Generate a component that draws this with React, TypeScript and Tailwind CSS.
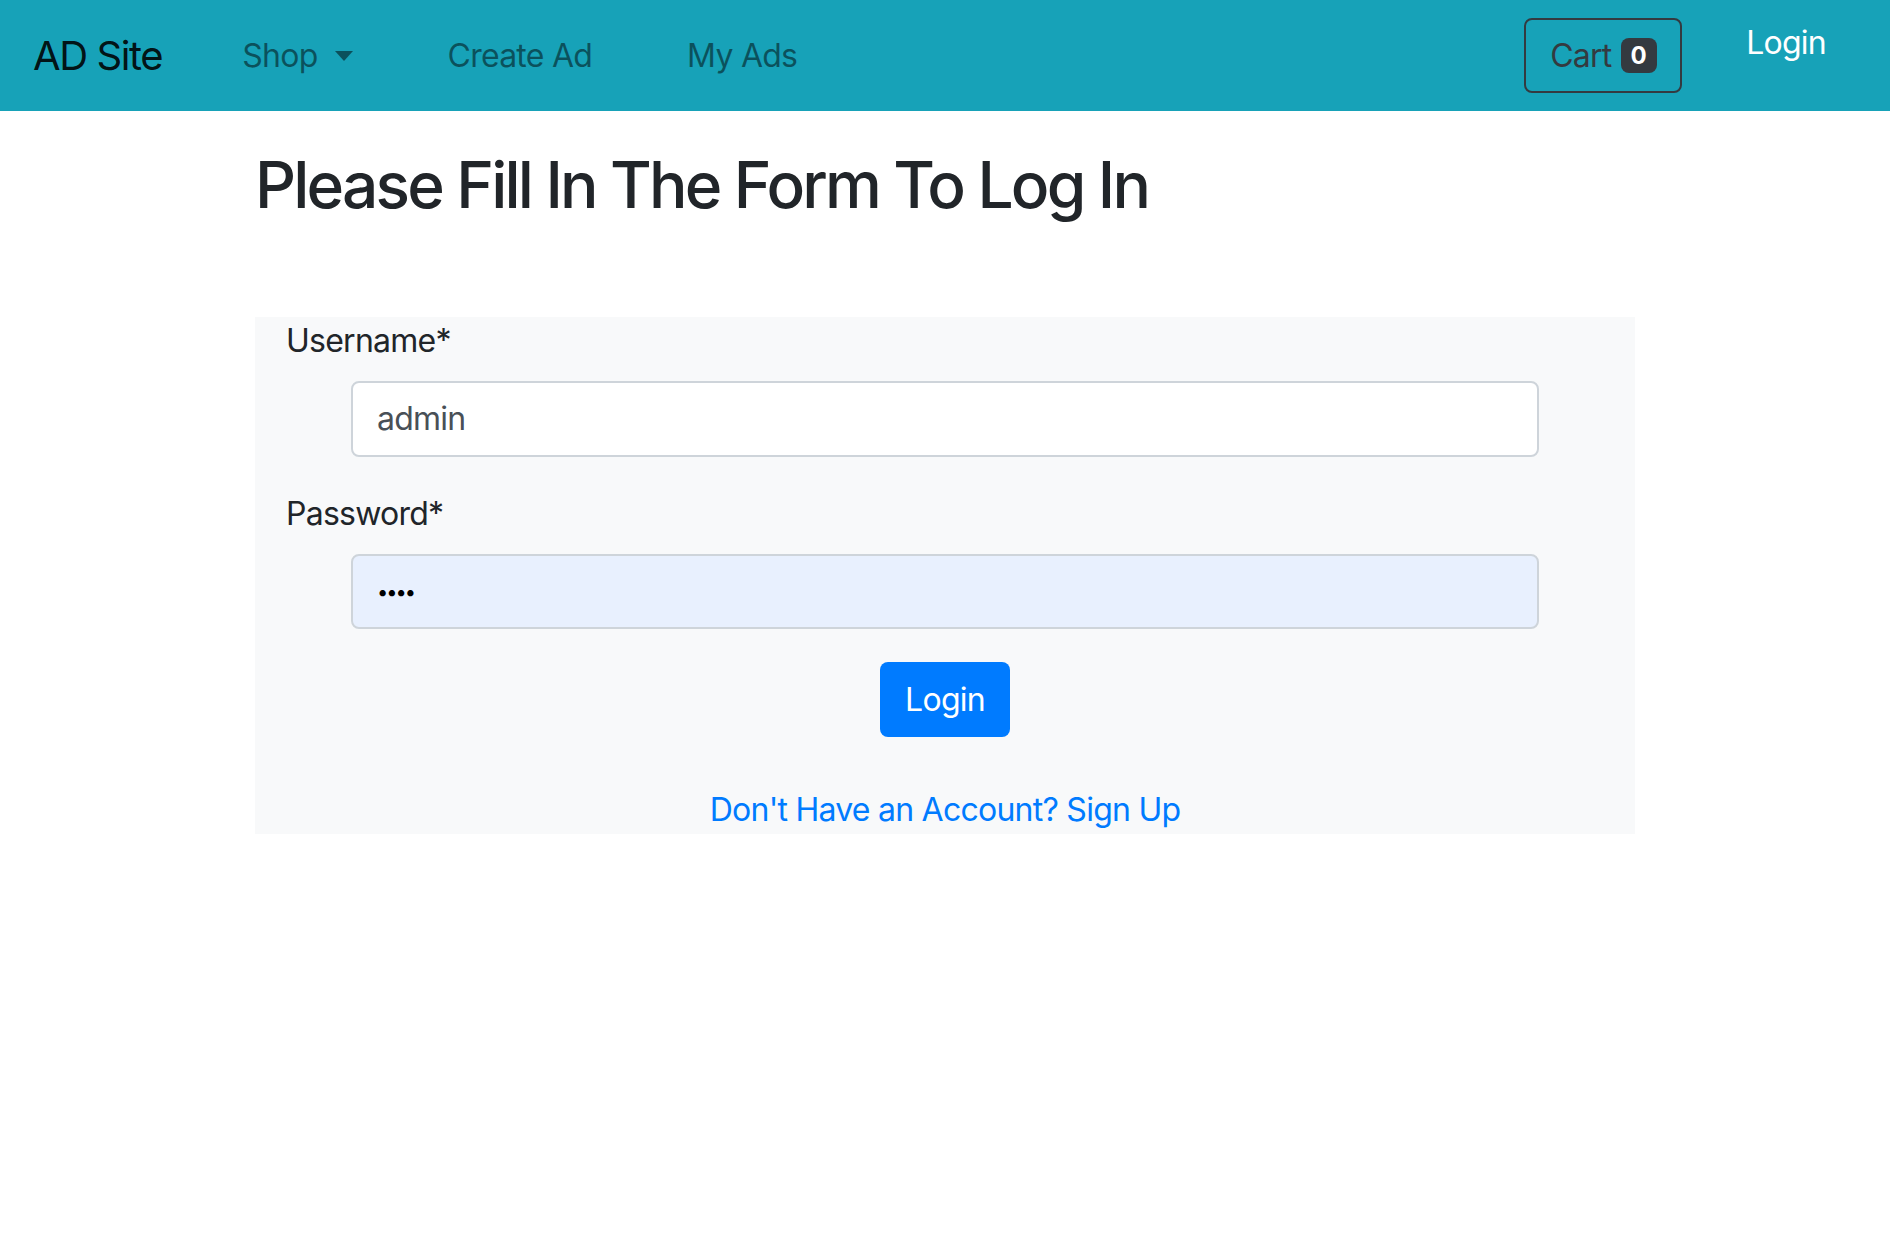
import React from "react";

export default function App() {
  return (
    <div
      className="min-h-[1246px] bg-white text-[#212529] tracking-[-0.75px]"
      style={{ fontFamily: "Inter, 'Noto Sans', Arial, sans-serif" }}
    >
      <nav className="flex h-[111px] items-center bg-[#17a2b8] pl-[33px] pr-[64px]">
        <span className="text-[40px] leading-[60px] tracking-[-1.4px] text-black/90">AD Site</span>
        <div className="ml-[80px] flex items-center gap-[95px] text-[32px] leading-[48px] text-black/50">
          <span className="flex items-center">
            Shop
            <span className="ml-[17px] inline-block h-0 w-0 border-x-[9.5px] border-t-[10px] border-x-transparent border-t-black/50" />
          </span>
          <span>Create Ad</span>
          <span>My Ads</span>
        </div>
        <div className="ml-auto flex h-full items-start">
          <div className="mt-[18px] flex h-[75px] w-[158px] items-center rounded-[8px] border-2 border-[#343a40] pl-[24px] text-[32px] text-[#343a40]">
            <span>Cart</span>
            <span className="ml-[9px] flex h-[35px] w-[36px] items-center justify-center rounded-[8px] bg-[#343a40] text-[24px] font-bold tracking-normal text-white">
              0
            </span>
          </div>
          <span className="ml-[64px] mt-[19px] text-[32px] leading-[48px] text-white">Login</span>
        </div>
      </nav>

      <main className="mx-auto w-[1380px]">
        <h1 className="mt-[35px] text-[64px] font-medium leading-[77px] tracking-[-2.8px] text-[#212529]">
          Please Fill In The Form To Log In
        </h1>
        <div className="mt-[94px] flex flex-col bg-[#f8f9fa] text-[32px]">
          <label className="pl-[31px] leading-[48px]">Username*</label>
          <div className="mt-[16px] px-[96px]">
            <div className="flex h-[76px] items-center rounded-[8px] border-2 border-[#ced4da] bg-white px-[24px] text-[#495057]">
              admin
            </div>
          </div>
          <label className="mt-[33px] pl-[31px] leading-[48px]">Password*</label>
          <div className="mt-[16px] px-[96px]">
            <div className="flex h-[75px] items-center rounded-[8px] border-2 border-[#ced4da] bg-[#e8f0fe] px-[24px] text-[20px] tracking-[-2px] text-black">
              ••••
            </div>
          </div>
          <div className="mt-[33px] flex justify-center">
            <button className="flex h-[75px] items-center rounded-[8px] bg-[#007bff] px-[25px] text-[32px] text-white">
              Login
            </button>
          </div>
          <div className="mt-[49px] flex justify-center">
            <span className="leading-[48px] text-[#007bff]">Don't Have an Account? Sign Up</span>
          </div>
        </div>
      </main>
    </div>
  );
}
